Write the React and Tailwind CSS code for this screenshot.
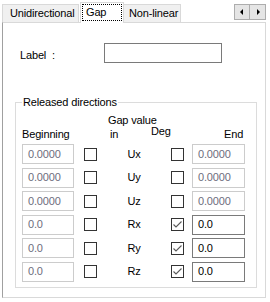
import React from 'react';

const font = "font-['Liberation_Sans',Arial,sans-serif]";

const rows = [
    { begin: '0.0000', name: 'Ux', deg: false, end: '0.0000' },
    { begin: '0.0000', name: 'Uy', deg: false, end: '0.0000' },
    { begin: '0.0000', name: 'Uz', deg: false, end: '0.0000' },
    { begin: '0.0', name: 'Rx', deg: true, end: '0.0' },
    { begin: '0.0', name: 'Ry', deg: true, end: '0.0' },
    { begin: '0.0', name: 'Rz', deg: true, end: '0.0' },
];

const CheckBox = ({ checked }) => (
    <div className="w-[13px] h-[13px] border border-[#333333] bg-white shrink-0">
        {checked && (
            <svg width="11" height="11" viewBox="0 0 11 11">
                <polyline points="1.5,5.5 4,8 9.5,2.5" fill="none" stroke="#5a5a5a" strokeWidth="1.1" />
            </svg>
        )}
    </div>
);

const Field = ({ value, enabled, className = '' }) => (
    <div
        className={`h-[20px] flex items-center pl-[5px] shrink-0 bg-white border ${
            enabled ? 'border-[#7a7a7a] text-black' : 'border-[#cccccc] text-[#6d6d7d]'
        } ${className}`}
    >
        {value}
    </div>
);

export default function App() {
    return (
        <div className={`w-[270px] h-[302px] bg-white text-[11px] leading-[13px] tracking-[-0.15px] text-black ${font}`}>
            {/* Tab strip */}
            <div className="flex items-end h-[22px] pl-[2px] relative">
                <div className="w-[77px] h-[18px] bg-[#f0f0f0] border border-b-0 border-[#d9d9d9] pl-[7px] flex items-center">
                    Unidirectional
                </div>
                <div className="w-[44px] h-[21px] -mb-px ml-px bg-white border border-b-0 border-[#d9d9d9] p-[1px] pb-[2px] relative z-10">
                    <div className="h-full border border-dotted border-black pl-[3px] flex items-start pt-[1px]">Gap</div>
                </div>
                <div className="w-[57px] h-[18px] bg-[#f0f0f0] border border-b-0 border-l-0 border-[#d9d9d9] pl-[5px] flex items-center">
                    Non-linear
                </div>
                <div className="ml-auto self-start mt-[4px] mr-[4px] flex">
                    <div className="w-[16px] h-[16px] bg-[#e5e5e5] border border-[#adadad] flex items-center justify-center">
                        <svg width="4" height="6" viewBox="0 0 4 6"><polygon points="3,0 3,6 0,3" fill="#000" /></svg>
                    </div>
                    <div className="w-[16px] h-[16px] bg-[#e5e5e5] border border-l-0 border-[#adadad] flex items-center justify-center">
                        <svg width="4" height="6" viewBox="0 0 4 6"><polygon points="1,0 1,6 4,3" fill="#000" /></svg>
                    </div>
                </div>
            </div>

            {/* Page */}
            <div className="ml-[2px] w-[264px] h-[276px] border border-[#d9d9d9] border-l-[#a0a0a0] bg-white pt-[20px]">
                <div className="flex items-start">
                    <span className="ml-[17px] mt-[6px]">Label&nbsp;&nbsp;:</span>
                    <div className="ml-[49px] w-[118px] h-[20px] border border-[#7a7a7a]" />
                </div>

                <fieldset className="mt-[33px] ml-[12px] w-[242px] h-[192px] border border-[#dcdcdc] m-0 p-0 min-w-0">
                    <legend className="ml-[6px] px-[1px]">Released directions</legend>

                    <div className="pl-[92px] pt-[5px]">Gap value</div>
                    <div className="flex items-start h-[16px] mt-px">
                        <span className="ml-[6px] w-[88px]">Beginning</span>
                        <span className="w-[41px]">in</span>
                        <span className="w-[73px] -mt-[3px]">Deg</span>
                        <span>End</span>
                    </div>

                    <div className="flex flex-col gap-[3.6px] pl-[6px]">
                        {rows.map((r) => (
                            <div key={r.name} className="flex items-center h-[20px]">
                                <Field value={r.begin} enabled={false} className="w-[52px]" />
                                <div className="ml-[10px]">
                                    <CheckBox checked={false} />
                                </div>
                                <div className="w-[74px] text-center">{r.name}</div>
                                <CheckBox checked={r.deg} />
                                <Field value={r.end} enabled={r.deg} className="ml-[8px] w-[53px]" />
                            </div>
                        ))}
                    </div>
                </fieldset>
            </div>
        </div>
    );
}
